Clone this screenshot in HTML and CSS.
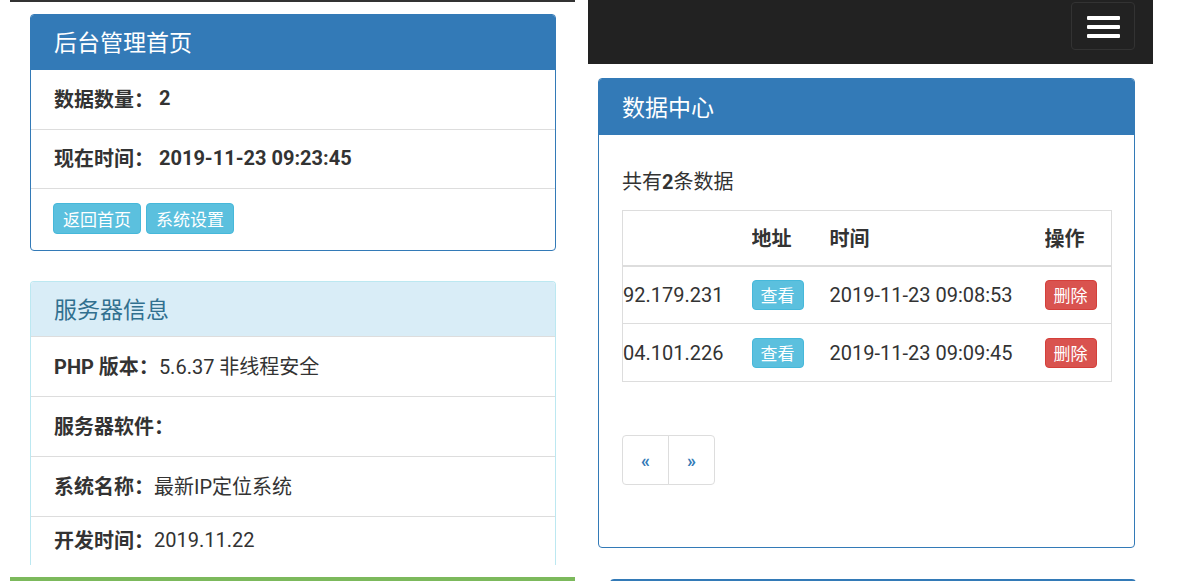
FILE: index.html
```html
<!DOCTYPE html>
<html lang="zh-CN">
<head>
    <meta charset="UTF-8">
    <meta name="viewport" content="width=device-width, initial-scale=1.0">
    <title>后台管理首页</title>
    <link rel="stylesheet" href="styles.css">
</head>
<body>
    <div class="shot shot-left">
        <div class="topline"></div>

        <div class="panel panel-primary">
            <div class="panel-heading">后台管理首页</div>
            <div class="panel-row"><b>数据数量：</b>&nbsp;<b>2</b></div>
            <div class="panel-row"><b>现在时间：</b>&nbsp;<b>2019-11-23 09:23:45</b></div>
            <div class="panel-row panel-foot">
                <a class="btn btn-info">返回首页</a>
                <a class="btn btn-info">系统设置</a>
            </div>
        </div>

        <div class="panel panel-info panel-cut">
            <div class="panel-heading">服务器信息</div>
            <div class="panel-row"><b>PHP 版本：</b>5.6.37 非线程安全</div>
            <div class="panel-row"><b>服务器软件：</b></div>
            <div class="panel-row"><b>系统名称：</b>最新IP定位系统</div>
            <div class="panel-row last"><b>开发时间：</b>2019.11.22</div>
        </div>

        <div class="greenline"></div>
    </div>

    <div class="shot shot-right">
        <div class="navbar">
            <button class="navbar-toggle" type="button">
                <span class="icon-bar"></span>
                <span class="icon-bar"></span>
                <span class="icon-bar"></span>
            </button>
        </div>

        <div class="panel panel-primary panel-data">
            <div class="panel-heading">数据中心</div>
            <div class="panel-body">
                <p class="count">共有<b>2</b>条数据</p>

                <table class="table">
                    <colgroup>
                        <col class="c-ip">
                        <col class="c-addr">
                        <col class="c-time">
                        <col class="c-op">
                    </colgroup>
                    <thead>
                        <tr>
                            <th></th>
                            <th>地址</th>
                            <th>时间</th>
                            <th>操作</th>
                        </tr>
                    </thead>
                    <tbody>
                        <tr>
                            <td>92.179.231</td>
                            <td><a class="btn btn-info btn-sm">查看</a></td>
                            <td>2019-11-23 09:08:53</td>
                            <td><a class="btn btn-danger btn-sm">删除</a></td>
                        </tr>
                        <tr>
                            <td>04.101.226</td>
                            <td><a class="btn btn-info btn-sm">查看</a></td>
                            <td>2019-11-23 09:09:45</td>
                            <td><a class="btn btn-danger btn-sm">删除</a></td>
                        </tr>
                    </tbody>
                </table>

                <ul class="pagination">
                    <li><a>&laquo;</a></li>
                    <li><a>&raquo;</a></li>
                </ul>
            </div>
        </div>

        <div class="panel-next"></div>
    </div>
</body>
</html>
```

FILE: styles.css
```css
* {
    box-sizing: border-box;
}
body {
    margin: 0;
    background-color: #fff;
    color: #333;
    font-family: Roboto, "Noto Sans CJK SC", sans-serif;
    font-size: 20px;
    display: flex;
    height: 581px;
    overflow: hidden;
}
.shot {
    display: flex;
    flex-direction: column;
}
.shot > * {
    flex-shrink: 0;
}
.shot-left {
    width: 565px;
    margin-left: 10px;
}
.shot-right {
    width: 565px;
    margin-left: 13px;
}
.topline {
    height: 2px;
    background-color: #333;
}
.greenline {
    height: 5px;
    margin-top: 12px;
    background-color: #7cb95c;
}

/* panels */
.panel {
    border: 1px solid #337ab7;
    border-radius: 4px;
    background-color: #fff;
    overflow: hidden;
}
.shot-left .panel {
    width: 526px;
    margin-left: 20px;
}
.panel-primary {
    margin-top: 12px;
}
.panel-heading {
    height: 55px;
    padding: 0 23px 3px;
    display: flex;
    align-items: center;
    font-size: 23px;
    background-color: #337ab7;
    color: #fff;
}
.panel-info {
    border-color: #bce8f1;
    margin-top: 30px;
}
.panel-info .panel-heading {
    background-color: #d9edf7;
    color: #31708f;
    height: 54px;
}
.panel-cut {
    border-bottom: none;
    border-radius: 4px 4px 0 0;
}
.panel-row {
    height: 59px;
    padding: 0 23px 3px;
    display: flex;
    align-items: center;
    border-top: 1px solid #ddd;
    white-space: pre;
}
.panel-primary .panel-heading + .panel-row {
    border-top: none;
}
.panel-info .panel-row {
    height: 60px;
}
.panel-info .panel-row.last {
    height: 49px;
}
.panel-foot {
    height: 62px;
    gap: 5px;
    padding-top: 1px;
    padding-left: 22px;
}

/* buttons */
.btn {
    display: inline-flex;
    align-items: center;
    justify-content: center;
    height: 31px;
    padding: 0 9px;
    border-radius: 4px;
    font-size: 17px;
    color: #fff;
    background-color: #5bc0de;
    border: 1px solid #46b8da;
}
.btn-sm {
    height: 30px;
    padding: 0 8px;
}
.btn-danger {
    background-color: #d9534f;
    border-color: #d43f3a;
}

/* navbar */
.navbar {
    height: 64px;
    background-color: #222;
    display: flex;
    justify-content: flex-end;
    align-items: flex-start;
    padding: 2px 18px 0 0;
}
.navbar-toggle {
    width: 64px;
    height: 48px;
    background-color: #222;
    border: 1px solid #333;
    border-radius: 4px;
    display: flex;
    flex-direction: column;
    align-items: center;
    justify-content: center;
    gap: 5px;
    padding: 2px 0 0;
}
.icon-bar {
    display: block;
    width: 33px;
    height: 4px;
    border-radius: 1px;
    background-color: #fff;
}

/* data panel */
.panel-data {
    width: 537px;
    margin: 14px 0 0 10px;
}
.panel-data .panel-heading {
    height: 56px;
    font-size: 23px;
}
.panel-body {
    height: 412px;
    padding: 33px 23px 0;
}
.count {
    margin: 0 0 14px;
    line-height: 28px;
}
.table {
    width: 489px;
    border-collapse: collapse;
    table-layout: fixed;
    border: 1px solid #ddd;
}
.c-ip { width: 129px; }
.c-addr { width: 78px; }
.c-time { width: 215px; }
.c-op { width: 67px; }
.table th,
.table td {
    padding: 0;
    text-align: left;
    white-space: nowrap;
    overflow: hidden;
}
.table th {
    height: 55px;
    font-weight: bold;
    border-bottom: 2px solid #ddd;
}
.table td {
    height: 58px;
    border-top: 1px solid #ddd;
}
.pagination {
    display: flex;
    list-style: none;
    margin: 53px 0 0;
    padding: 0;
}
.pagination li a {
    display: flex;
    align-items: center;
    justify-content: center;
    width: 47px;
    height: 50px;
    border: 1px solid #ddd;
    color: #337ab7;
    font-size: 18px;
    font-weight: bold;
}
.pagination li:first-child a {
    border-radius: 4px 0 0 4px;
}
.pagination li + li a {
    margin-left: -1px;
    border-radius: 0 4px 4px 0;
}
.panel-next {
    width: 526px;
    height: 10px;
    margin: 31px 0 0 22px;
    border-top: 3px solid #337ab7;
    border-radius: 4px 4px 0 0;
}
```
